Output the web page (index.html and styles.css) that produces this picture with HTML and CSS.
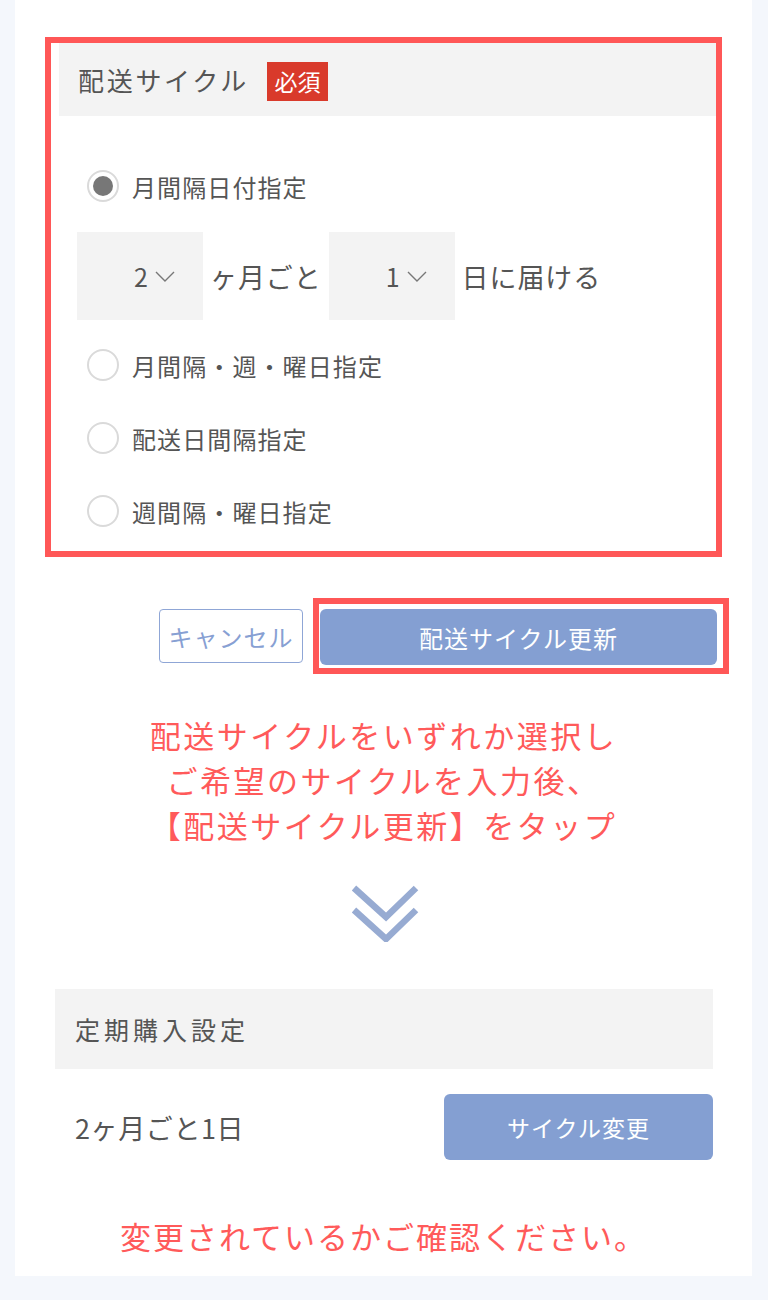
FILE: index.html
```html
<!DOCTYPE html>
<html lang="ja">
<head>
<meta charset="utf-8">
<title>配送サイクル</title>
<link rel="stylesheet" href="styles.css">
</head>
<body>
<div class="panel">
  <section class="highlight">
    <div class="sec-head">
      <span class="sec-title">配送サイクル</span>
      <span class="badge">必須</span>
    </div>
    <div class="options">
      <label class="opt">
        <span class="radio checked"></span>
        <span class="opt-text">月間隔日付指定</span>
      </label>
      <div class="select-row">
        <div class="select">
          <span class="sel-val">2</span>
          <svg class="chev" width="20" height="11" viewBox="0 0 20 11"><path d="M1 1 L10 10 L19 1" fill="none" stroke="#777" stroke-width="1.4"/></svg>
        </div>
        <span class="sel-text">ヶ月ごと</span>
        <div class="select">
          <span class="sel-val">1</span>
          <svg class="chev" width="20" height="11" viewBox="0 0 20 11"><path d="M1 1 L10 10 L19 1" fill="none" stroke="#777" stroke-width="1.4"/></svg>
        </div>
        <span class="sel-text">日に届ける</span>
      </div>
      <label class="opt opt-2">
        <span class="radio"></span>
        <span class="opt-text">月間隔・週・曜日指定</span>
      </label>
      <label class="opt opt-3">
        <span class="radio"></span>
        <span class="opt-text">配送日間隔指定</span>
      </label>
      <label class="opt opt-3">
        <span class="radio"></span>
        <span class="opt-text">週間隔・曜日指定</span>
      </label>
    </div>
  </section>

  <div class="btn-row">
    <button class="btn-cancel">キャンセル</button>
    <div class="btn-highlight">
      <button class="btn-update">配送サイクル更新</button>
    </div>
  </div>

  <p class="instruction">配送サイクルをいずれか選択し<br>ご希望のサイクルを入力後、<br>【配送サイクル更新】をタップ</p>

  <div class="arrow">
    <svg width="70" height="62" viewBox="0 0 70 62">
      <path d="M4 8 L36 37 L66 8" fill="none" stroke="#97abd2" stroke-width="6.5"/>
      <path d="M4 30 L36 59 L66 30" fill="none" stroke="#97abd2" stroke-width="6.5"/>
    </svg>
  </div>

  <div class="result-head">定期購入設定</div>
  <div class="result-row">
    <span class="result-val">2ヶ月ごと1日</span>
    <button class="btn-change">サイクル変更</button>
  </div>

  <p class="note">変更されているかご確認ください。</p>
</div>
</body>
</html>
```

FILE: styles.css
```css
* { box-sizing: border-box; }

body {
  margin: 0;
  background: #f4f7fc;
  font-family: "Noto Sans CJK JP", "Noto Sans", sans-serif;
  color: #555;
}

.panel {
  margin: 0 16px 0 15px;
  background: #fff;
  padding: 37px 0 18px;
}

.highlight {
  margin: 0 30px;
  border: 6px solid #ff5757;
}

.sec-head {
  margin-left: 8px;
  height: 73px;
  background: #f3f3f3;
  display: flex;
  align-items: center;
  padding-left: 19px;
  gap: 18px;
}

.sec-title {
  font-size: 26px;
  letter-spacing: 2.7px;
  color: #555;
  line-height: 1;
}

.badge {
  background: #d93a2b;
  color: #fff;
  font-size: 23px;
  line-height: 39px;
  height: 39px;
  width: 61px;
  text-align: center;
  margin-top: 4px;
}

.options {
  padding: 47px 0 17px 36px;
  display: flex;
  flex-direction: column;
}

.opt {
  height: 46px;
  display: flex;
  align-items: center;
  gap: 13px;
}

.opt-2 { margin-top: 22px; }
.opt-3 { margin-top: 27px; }

.radio {
  width: 32px;
  height: 32px;
  border-radius: 50%;
  border: 2px solid #dadada;
  background: #fff;
  display: flex;
  align-items: center;
  justify-content: center;
  flex: none;
}

.radio.checked::after {
  content: "";
  width: 20px;
  height: 20px;
  border-radius: 50%;
  background: #777;
}

.opt-text {
  font-size: 24px;
  letter-spacing: 1.1px;
  color: #555;
}

.select-row {
  margin: 23px 0 0 -10px;
  display: flex;
  align-items: center;
}

.select {
  width: 126px;
  height: 88px;
  background: #f3f3f3;
  display: flex;
  align-items: center;
  justify-content: flex-end;
  padding-right: 28px;
  gap: 7px;
}

.sel-val {
  font-size: 25px;
  color: #555;
}

.chev { display: block; }

.sel-text {
  font-size: 27px;
  color: #555;
  margin: 0 7px 0 7px;
  letter-spacing: 0.9px;
}

.btn-row {
  margin: 41px 0 0 144px;
  display: flex;
  align-items: center;
  gap: 10px;
}

.btn-cancel {
  width: 144px;
  height: 54px;
  border: 1px solid #8fa6d6;
  border-radius: 4px;
  background: #fff;
  color: #87a0d3;
  font-family: inherit;
  font-size: 24px;
  letter-spacing: 1px;
  padding: 0;
}

.btn-highlight {
  width: 416px;
  border: 6px solid #ff5757;
  padding: 5px 6px 3px 1px;
}

.btn-update {
  width: 100%;
  height: 56px;
  border: none;
  border-radius: 6px;
  background: #849fd2;
  color: #fff;
  font-family: inherit;
  font-size: 24px;
  letter-spacing: 1px;
  padding: 0;
}

.instruction {
  margin: 38px 0 0;
  text-align: center;
  color: #ff5a5a;
  font-size: 31px;
  line-height: 45px;
  letter-spacing: 2.5px;
}

.arrow {
  margin-top: 33px;
  display: flex;
  justify-content: center;
  padding-left: 2px;
}

.arrow svg { display: block; }

.result-head {
  margin: 47px 39px 0 40px;
  height: 80px;
  background: #f3f3f3;
  display: flex;
  align-items: center;
  padding-left: 20px;
  font-size: 25px;
  letter-spacing: 4px;
  color: #555;
}

.result-row {
  margin: 25px 39px 0 40px;
  padding-left: 20px;
  display: flex;
  align-items: center;
  justify-content: space-between;
}

.result-val {
  font-size: 27px;
  letter-spacing: 0.6px;
  color: #555;
}

.btn-change {
  width: 269px;
  height: 66px;
  border: none;
  border-radius: 6px;
  background: #849fd2;
  color: #fff;
  font-family: inherit;
  font-size: 23px;
  letter-spacing: 1px;
  padding: 0;
}

.note {
  margin: 53px 0 0;
  text-align: center;
  color: #ff5a5a;
  font-size: 31px;
  line-height: 45px;
  letter-spacing: 2px;
}
```
